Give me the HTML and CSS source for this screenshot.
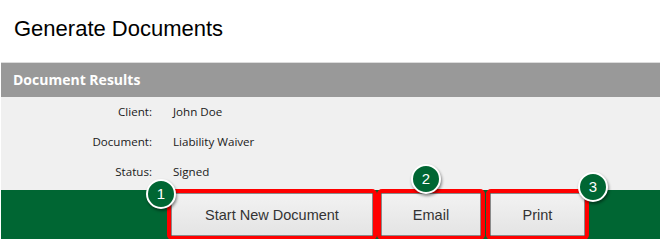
FILE: index.html
```html
<!DOCTYPE html>
<html lang="en">
<head>
  <meta charset="UTF-8" />
  <title>Generate Documents</title>
  <link rel="stylesheet" href="styles.css">
</head>
<body>

<h1 class="page-title">Generate Documents</h1>

<div class="panel">
  <div class="panel-head">Document Results</div>

  <div class="panel-body">
    <div class="label">Client:</div>
    <div class="value">John Doe</div>
    <div class="label">Document:</div>
    <div class="value">Liability Waiver</div>
    <div class="label">Status:</div>
    <div class="value">Signed</div>
  </div>

  <div class="panel-foot">
    <!-- red boxes + numbered markers are the callouts -->
    <div class="mark mark-start">
      <button class="btn btn-start">Start New Document</button>
      <span class="badge badge-1">1</span>
    </div>
    <div class="mark mark-email">
      <button class="btn btn-email">Email</button>
      <span class="badge badge-2">2</span>
    </div>
    <div class="mark mark-print">
      <button class="btn btn-print">Print</button>
      <span class="badge badge-3">3</span>
    </div>
  </div>
</div>

</body>
</html>
```

FILE: styles.css
```css
html, body {
  margin: 0;
  padding: 0;
  background: #fff;
  overflow: hidden;
}

.page-title {
  margin: 0;
  padding: 16px 0 0 14px;
  font-family: "Liberation Sans", Arial, sans-serif;
  font-weight: normal;
  font-size: 22px;
  line-height: 26px;
  color: #000;
  height: 46px;
}

.panel {
  margin: 0 0 0 1px;
  border-top: 1px solid #dcdcdc;
  font-family: "Open Sans", "Noto Sans", sans-serif;
}

.panel-head {
  height: 34px;
  line-height: 34px;
  padding-left: 12px;
  background: #999999;
  color: #fff;
  font-weight: bold;
  font-size: 14px;
}

.panel-body {
  background: #f0f0f0;
  display: grid;
  grid-template-columns: 151px auto;
  column-gap: 21px;
  padding: 0 0 3px 0;
  font-size: 11.6px;
  line-height: 30px;
  color: #1a1a1a;
}

.label {
  text-align: right;
}

.panel-foot {
  background: #006633;
  height: 49px;
  display: flex;
  padding-left: 166px;
}

.mark {
  position: relative;
  box-sizing: border-box;
  height: 51px;
  margin-top: -1px;
  border: 4px solid #ff0000;
  border-radius: 5px;
  padding: 0;
}

.mark-start { width: 210px; }
.mark-email { width: 108px; }
.mark-print { width: 103px; margin-left: 1px; }

.btn {
  display: block;
  box-sizing: border-box;
  width: 100%;
  height: 100%;
  margin: 0;
  border: 1px solid #8a8a8a;
  border-radius: 1px;
  background: linear-gradient(#f2f2f2, #e4e4e4);
  font-family: "Liberation Sans", Arial, sans-serif;
  font-size: 14.5px;
  color: #333;
  padding: 0;
}

.badge {
  position: absolute;
  width: 26px;
  height: 26px;
  line-height: 26px;
  border: 2px solid #fff;
  border-radius: 50%;
  background: #006633;
  color: #fff;
  text-align: center;
  font-family: "Liberation Sans", Arial, sans-serif;
  font-size: 15px;
  box-shadow: 1px 2px 3px rgba(0, 0, 0, 0.45);
}

.badge-1 { left: -25px; top: -14px; }
.badge-2 { left: 30px; top: -29px; }
.badge-3 { right: -23px; top: -21px; }
```
